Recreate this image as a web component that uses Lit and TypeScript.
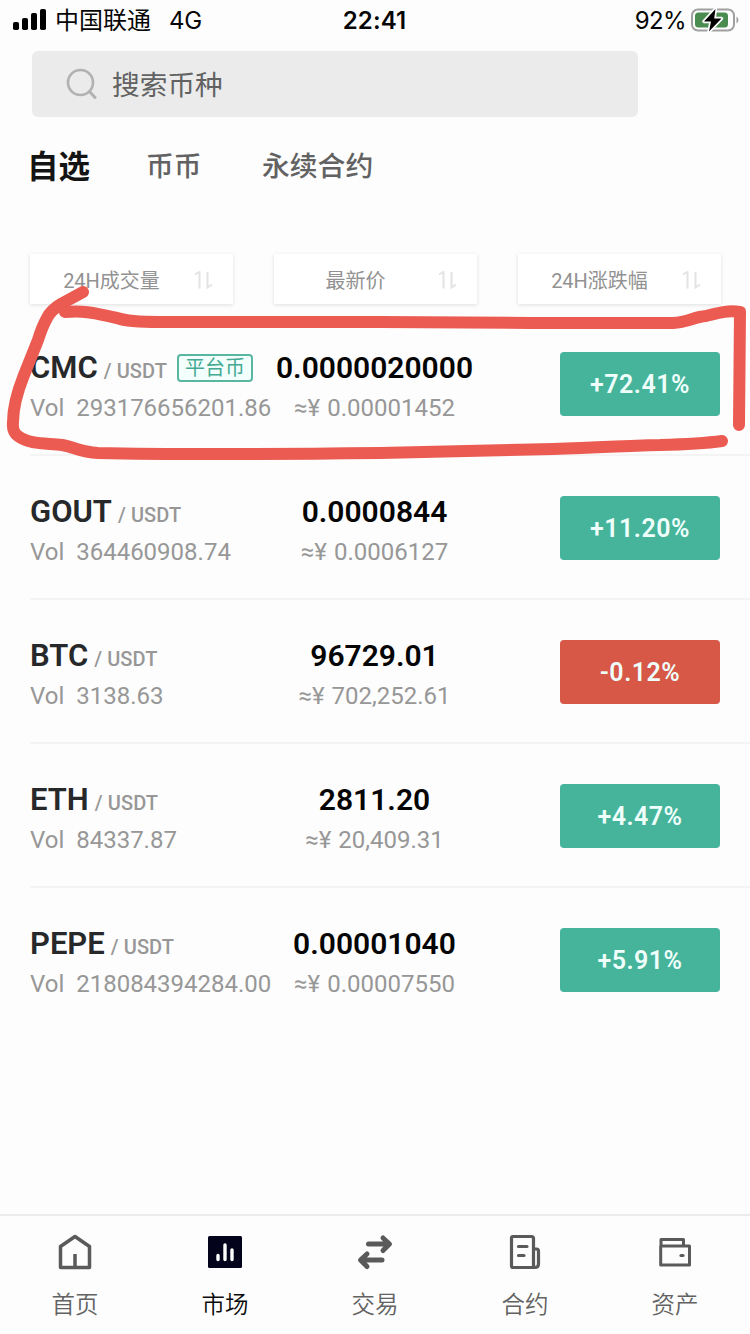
import { LitElement, html, css, svg } from "lit";
import { customElement, property } from "lit/decorators.js";
import { classMap } from "lit/directives/class-map.js";

interface Pair {
  base: string;
  tag?: string;
  vol: string;
  price: string;
  cny: string;
  change: string;
}

const PAIRS: Pair[] = [
  { base: "CMC", tag: "平台币", vol: "293176656201.86", price: "0.0000020000", cny: "0.00001452", change: "+72.41%" },
  { base: "GOUT", vol: "364460908.74", price: "0.0000844", cny: "0.0006127", change: "+11.20%" },
  { base: "BTC", vol: "3138.63", price: "96729.01", cny: "702,252.61", change: "-0.12%" },
  { base: "ETH", vol: "84337.87", price: "2811.20", cny: "20,409.31", change: "+4.47%" },
  { base: "PEPE", vol: "218084394284.00", price: "0.00001040", cny: "0.00007550", change: "+5.91%" },
];

@customElement("status-bar")
class StatusBar extends LitElement {
  static styles = css`
    :host { display: grid; grid-template-columns: 1fr auto 1fr; align-items: center; height: 40px; padding: 0 11px 0 13px; font: 24px/40px Inter, "Noto Sans CJK SC", sans-serif; color: #060606; }
    .left, .right { display: flex; align-items: center; }
    .right { justify-content: flex-end; gap: 5px; }
    .left span, .time, .pct { padding-top: 2px; line-height: 38px; }
    .signal { width: 34px; height: 22px; margin-right: 8px; }
    .net { margin-left: 18px; letter-spacing: -0.3px; }
    .time { font-weight: 600; letter-spacing: 0.1px; margin-right: 3px; }
    .pct { letter-spacing: -0.6px; }
    .battery { width: 48px; height: 26px; }
  `;
  render() {
    return html`
      <div class="left">
        <svg class="signal" viewBox="0 0 34 22">
          <rect x="0" y="13" width="6" height="8" rx="1.8" />
          <rect x="9" y="9" width="6" height="12" rx="1.8" />
          <rect x="18" y="4" width="6" height="17" rx="1.8" />
          <rect x="27" y="0" width="6" height="21" rx="1.8" />
        </svg>
        <span>中国联通</span><span class="net">4G</span>
      </div>
      <div class="time">22:41</div>
      <div class="right">
        <span class="pct">92%</span>
        <svg class="battery" viewBox="0 0 48 26">
          <rect x="1" y="2.5" width="42" height="21" rx="6" fill="none" stroke="#a0a0a0" stroke-width="2" />
          <rect x="4" y="5.5" width="33" height="15" rx="3.5" fill="#4a8c50" />
          <path d="M45.5 9.5Q47.5 10.5 47.5 13T45.5 16.5Z" fill="#a0a0a0" />
          <path d="M24.5 2 13 14.5H20L18 24.5 30.5 11.5H23.2Z" stroke="#fff" stroke-width="3.4" stroke-linejoin="round" paint-order="stroke" fill="#000" />
        </svg>
      </div>
    `;
  }
}

@customElement("sort-box")
class SortBox extends LitElement {
  @property() label = "";
  static styles = css`
    :host { display: grid; grid-template-columns: 1fr auto; align-items: center; height: 50px; padding: 4px 20px 0 0; box-sizing: border-box; background: #fff; box-shadow: 0 1px 4px rgba(0, 0, 0, 0.12); font: 20px/46px Roboto, "Noto Sans CJK SC", sans-serif; color: #929292; text-align: center; }
    .arrows { width: 20px; height: 20px; }
  `;
  render() {
    return html`
      <span>${this.label}</span>
      <svg class="arrows" viewBox="0 0 20 20" fill="none" stroke="#e3e3e3" stroke-width="2">
        <path d="M2 3.500 6.500 1V17.500M14.500 1V16.500L19 13.500" />
      </svg>
    `;
  }
}

@customElement("market-row")
class MarketRow extends LitElement {
  @property({ attribute: false }) pair!: Pair;
  static styles = css`
    :host { display: block; padding-left: 30px; font-family: Roboto, "Noto Sans CJK SC", sans-serif; }
    .row { display: grid; grid-template-columns: 241px 207px 1fr; align-items: center; height: 144px; box-sizing: border-box; padding: 2px 30px 0 0; border-bottom: 2px solid #f4f4f4; }
    .cell { padding-top: 5px; }
    .line1 { display: flex; align-items: baseline; height: 42px; line-height: 42px; white-space: nowrap; }
    .line2 { height: 38px; font-size: 24px; line-height: 38px; color: #979797; white-space: pre; letter-spacing: 0; }
    .base { font-size: 31px; font-weight: 600; color: #262829; }
    .quote { font-size: 20px; font-weight: 500; color: #979797; margin-left: 6px; letter-spacing: 0.1px; }
    .tag { align-self: center; margin-left: 10px; height: 28px; width: 76px; box-sizing: border-box; border: 2px solid #59b6a0; border-radius: 4px; font-size: 20px; line-height: 24px; text-align: center; color: #45aa93; background: #f3fffc; }
    .mid { text-align: center; }
    .yen { margin-right: 1px; }
    .price { justify-content: center; font-size: 30px; font-weight: 600; color: #050505; }
    .change { justify-self: end; width: 160px; height: 64px; box-sizing: border-box; padding-top: 1px; border-radius: 4px; background: #46b49b; color: #effffb; font-size: 25px; font-weight: 600; line-height: 64px; text-align: center; letter-spacing: 0.5px; }
    .down { background: #d75847; }
    .last { border-bottom-color: transparent; }
  `;
  render() {
    const p = this.pair;
    return html`
      <div class=${classMap({ row: true, last: p.base === "PEPE" })}>
        <div class="cell">
          <div class="line1">
            <span class="base">${p.base}</span><span class="quote">/ USDT</span>
            ${p.tag ? html`<span class="tag">${p.tag}</span>` : ""}
          </div>
          <div class="line2">Vol  ${p.vol}</div>
        </div>
        <div class="cell mid">
          <div class="line1 price">${p.price}</div>
          <div class="line2"><span class="yen">≈¥</span> ${p.cny}</div>
        </div>
        <div class=${classMap({ change: true, down: p.change.startsWith("-") })}>${p.change}</div>
      </div>
    `;
  }
}

const ICONS = {
  home: svg`<path d="M3.5 34.5V13.5L18 3.5 32.5 13.5V34.5Z M18 34.5V21" fill="none" stroke="#5a5a5a" stroke-width="3.5" stroke-linejoin="round"/>`,
  market: svg`<rect x="1" y="3" width="34" height="32" rx="1.5" fill="#03031c"/><path d="M11 22.5V26.5M18 12V26.5M25 17V26.5" stroke="#fff" stroke-width="3.4" stroke-linecap="round"/>`,
  trade: svg`<path d="M11.500 11H32M26 5 32.500 11 26 17.500M25 27H4M10 21 3.500 27 10 33.500" fill="none" stroke="#5a5a5a" stroke-width="5" stroke-linecap="round" stroke-linejoin="round"/>`,
  contract: svg`<path d="M27 34.500H6Q4.500 34.500 4.500 33V5Q4.500 3.500 6 3.500H24.500Q26.500 3.500 26.500 5.500V34.500M26.500 16H29.500Q31.500 16 31.500 18V31Q31.500 34.500 28 34.500H26.500" fill="none" stroke="#5a5a5a" stroke-width="3.200" stroke-linejoin="round"/><path d="M11.500 13.500H20M11.500 22.500H17" stroke="#5a5a5a" stroke-width="3.200" stroke-linecap="round"/>`,
  asset: svg`<path d="M4 12.500V6.500H26.500V12.500M3.700 13H32.500V32H3.700Z" fill="none" stroke="#5a5a5a" stroke-width="3" stroke-linejoin="round"/><path d="M24 22.500H26" stroke="#5a5a5a" stroke-width="3.200" stroke-linecap="round"/>`,
};

const TABS = [
  { icon: ICONS.home, label: "首页", on: false },
  { icon: ICONS.market, label: "市场", on: true },
  { icon: ICONS.trade, label: "交易", on: false },
  { icon: ICONS.contract, label: "合约", on: false },
  { icon: ICONS.asset, label: "资产", on: false },
];

@customElement("tab-bar")
class TabBar extends LitElement {
  static styles = css`
    :host { display: grid; grid-template-columns: repeat(5, 1fr); height: 120px; box-sizing: border-box; border-top: 2px solid #ececec; font-family: "Noto Sans CJK SC", sans-serif; }
    .tab { display: flex; flex-direction: column; align-items: center; padding-top: 17px; gap: 14px; font-size: 23.5px; line-height: 36px; font-weight: 350; color: #626262; }
    .on { color: #0a0a0a; }
    .icon { width: 36px; height: 38px; overflow: visible; }
  `;
  render() {
    return TABS.map(
      (t) => html`<div class=${classMap({ tab: true, on: t.on })}>
        <svg class="icon" viewBox="0 0 36 38">${t.icon}</svg>
        <span>${t.label}</span>
      </div>`
    );
  }
}

@customElement("app-root")
class AppRoot extends LitElement {
  static styles = css`
    :host { display: flex; flex-direction: column; position: relative; width: 750px; height: 1334px; overflow: hidden; background: #fdfdfd; font-family: "Noto Sans CJK SC", sans-serif; }
    .search { display: flex; align-items: center; gap: 14px; width: 606px; height: 66px; box-sizing: border-box; margin: 11px 0 0 32px; padding: 0 0 2px 34px; border-radius: 6px; background: #ebebeb; color: #626262; font-size: 27.7px; }
    .glass { width: 32px; height: 32px; }
    .tabs { display: flex; align-items: center; height: 56px; margin: 19px 0 0 27px; font-size: 27.8px; font-weight: 500; color: #626262; }
    .active { font-size: 31.5px; font-weight: 700; color: #141414; width: 119px; }
    .spot { width: 116px; }
    .filters { display: grid; grid-template-columns: repeat(3, 203px); gap: 41px; margin: 62px 0 8px 30px; }
    .list { flex: 1; }
    .mark { position: absolute; left: 0; top: 270px; width: 750px; height: 200px; }
  `;
  render() {
    return html`
      <status-bar></status-bar>
      <div class="search">
        <svg class="glass" viewBox="0 0 32 32" fill="none" stroke="#b1b1b1" stroke-width="2.6" stroke-linecap="round">
          <circle cx="14.500" cy="15.500" r="12.500" /><path d="M23.500 24.500 29 30.500" stroke-width="3" />
        </svg>
        <span>搜索币种</span>
      </div>
      <div class="tabs"><span class="active">自选</span><span class="spot">币币</span><span>永续合约</span></div>
      <div class="filters">
        <sort-box label="24H成交量"></sort-box>
        <sort-box label="最新价"></sort-box>
        <sort-box label="24H涨跌幅"></sort-box>
      </div>
      <div class="list">${PAIRS.map((p) => html`<market-row .pair=${p}></market-row>`)}</div>
      <tab-bar></tab-bar>
      <svg class="mark" viewBox="0 270 750 200" fill="none" stroke="#eb5b52" stroke-width="12" stroke-linecap="round" stroke-linejoin="round">
        <path d="M83 292 61 304Q51 310 47 318Q42 327 38 340L24 375C18 390 13 405 13 422Q12 432 18 436C30 445 47 443 62 445C74 447 80 452 98 453C190 455 290 454 380 453L553 449C600 448 635 445 660 445Q700 444 722 441" />
        <path d="M65 312C90 310 100 315 117 318Q128 322 160 322H380L530 323H673C688 322 694 317 706 316C718 313 727 310 740 312L739 425" />
      </svg>
    `;
  }
}
